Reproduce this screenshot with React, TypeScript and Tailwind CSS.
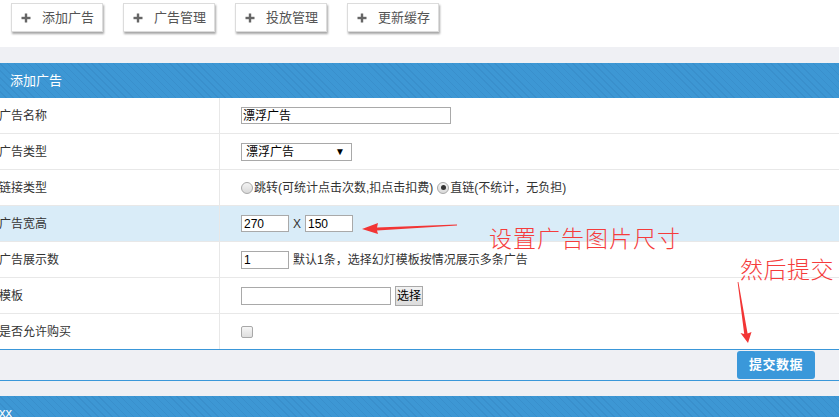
import React from "react";

const font = { fontFamily: '"Liberation Sans", "Noto Sans CJK SC", sans-serif' };

const stripe =
  "bg-[#3d97d4] bg-[repeating-linear-gradient(45deg,rgba(255,255,255,0)_0px,rgba(255,255,255,0)_4px,rgba(40,110,170,0.18)_4px,rgba(40,110,170,0.18)_5px)]";

function TopButton({ label }: { label: string }) {
  return (
    <div className="w-[92px] h-[29px] bg-white border border-[#dcdcdc] shadow-[1px_2px_2px_rgba(0,0,0,0.35)] flex items-center pl-[9px] text-[13px] text-[#555]">
      <svg width="10" height="10" viewBox="0 0 10 10" className="mr-[11px]">
        <rect x="3.8" y="0.5" width="2.4" height="9" fill="#666" />
        <rect x="0.5" y="3.8" width="9" height="2.4" fill="#666" />
      </svg>
      <span>{label}</span>
    </div>
  );
}

function Radio({ checked }: { checked?: boolean }) {
  return (
    <span className="inline-flex items-center justify-center w-[12px] h-[12px] rounded-full border border-[#a8a8a8] bg-[linear-gradient(#f4f4f4,#d9d9d9)] mr-[1px]">
      {checked && <span className="w-[5px] h-[5px] rounded-full bg-[#333]" />}
    </span>
  );
}

function Row({
  label,
  children,
  highlight,
  last,
}: {
  label: string;
  children: React.ReactNode;
  highlight?: boolean;
  last?: boolean;
}) {
  return (
    <div
      className={`grid grid-cols-[220px_1fr] h-[36px] border-b ${
        last ? "border-[#3a97d9]" : "border-[#e8e8e8]"
      } ${highlight ? "bg-[#d9ecf8]" : "bg-white"}`}
    >
      <div className="border-r border-[#e8e8e8] flex items-center text-[12px] text-[#333] -ml-[1px]">
        {label}
      </div>
      <div className="flex items-center pl-[21px] text-[12px] text-[#333]">{children}</div>
    </div>
  );
}

export default function App() {
  return (
    <div className="relative w-[839px] h-[417px] overflow-hidden bg-white" style={font}>
      {/* toolbar */}
      <div className="h-[47px] flex gap-[20px] pl-[11px] pt-[3px]">
        <TopButton label="添加广告" />
        <TopButton label="广告管理" />
        <TopButton label="投放管理" />
        <TopButton label="更新缓存" />
      </div>
      <div className="h-[16px] bg-[#eff0f4]" />

      {/* panel header */}
      <div className={`h-[35px] flex items-center pl-[10px] text-[13px] text-white ${stripe}`}>
        添加广告
      </div>

      {/* form rows */}
      <Row label="广告名称">
        <div className="w-[210px] h-[17px] border border-[#a9a9a9] bg-white flex items-center pl-[1px] text-[12px] text-black">
          漂浮广告
        </div>
      </Row>
      <Row label="广告类型">
        <div className="w-[111px] h-[18px] border border-[#a9a9a9] bg-white flex items-center justify-between pl-[4px] pr-[6px] text-[12px] text-black">
          <span>漂浮广告</span>
          <span className="text-[10px]">▼</span>
        </div>
      </Row>
      <Row label="链接类型">
        <div className="flex items-center text-[12px] text-[#333]">
          <Radio />
          <span>跳转(可统计点击次数,扣点击扣费)</span>
          <span className="ml-[4px]" />
          <Radio checked />
          <span>直链(不统计，无负担)</span>
        </div>
      </Row>
      <Row label="广告宽高" highlight>
        <div className="flex items-center">
          <div className="w-[48px] h-[17px] border border-[#a9a9a9] bg-white flex items-center pl-[2px] text-[12px] text-black">
            270
          </div>
          <span className="mx-[4px] text-[12px] text-[#333]">X</span>
          <div className="w-[48px] h-[17px] border border-[#a9a9a9] bg-white flex items-center pl-[2px] text-[12px] text-black">
            150
          </div>
        </div>
      </Row>
      <Row label="广告展示数">
        <div className="flex items-center">
          <div className="w-[48px] h-[18px] border border-[#a9a9a9] bg-white flex items-center pl-[2px] text-[12px] text-black">
            1
          </div>
          <span className="ml-[4px] text-[12px] text-[#333]">默认1条，选择幻灯模板按情况展示多条广告</span>
        </div>
      </Row>
      <Row label="模板">
        <div className="flex items-center">
          <div className="w-[150px] h-[18px] border border-[#a9a9a9] bg-white" />
          <div className="ml-[4px] h-[20px] px-[1px] border border-[#a9a9a9] bg-[linear-gradient(#f2f2f2,#dcdcdc)] flex items-center text-[12px] text-black">
            选择
          </div>
        </div>
      </Row>
      <Row label="是否允许购买" last>
        <span className="w-[12px] h-[12px] rounded-[2px] border border-[#a8a8a8] bg-[linear-gradient(#f6f6f6,#dedede)]" />
      </Row>

      {/* footer with submit */}
      <div className="h-[31px] bg-[#eff0f4] border-b border-[#3a97d9] flex items-center justify-end pr-[24px]">
        <div className="w-[78px] h-[28px] rounded-[3px] bg-[#3a98da] flex items-center justify-center text-[13px] text-white font-bold tracking-[0.5px]">
          提交数据
        </div>
      </div>
      <div className="h-[15px] bg-[#eff0f4]" />

      {/* next panel header */}
      <div className={`h-[34px] flex items-center -ml-[1px] text-[13px] text-white ${stripe}`}>xx</div>

      {/* red annotations */}
      <div
        className="absolute left-[489px] top-[222px] text-[23px] leading-[30px] text-[#f53c3c] font-light tracking-[1px]"
        style={{ fontFamily: '"Noto Sans CJK SC", sans-serif' }}
      >
        设置广告图片尺寸
      </div>
      <div
        className="absolute left-[740px] top-[253px] text-[23px] leading-[30px] text-[#f53c3c] font-light tracking-[0.5px]"
        style={{ fontFamily: '"Noto Sans CJK SC", sans-serif' }}
      >
        然后提交
      </div>
      <svg className="absolute inset-0 pointer-events-none" width="839" height="417" viewBox="0 0 839 417">
        <polygon
          points="457,224.6 377,227.4 378,223 362,229 378,234 377,230.4 457,225.4"
          fill="#f23535"
        />
        <polygon
          points="737.6,282 744.2,334 740.5,333 748,343 751.5,332 747.6,333.6 738.4,282"
          fill="#f23535"
        />
      </svg>
    </div>
  );
}
